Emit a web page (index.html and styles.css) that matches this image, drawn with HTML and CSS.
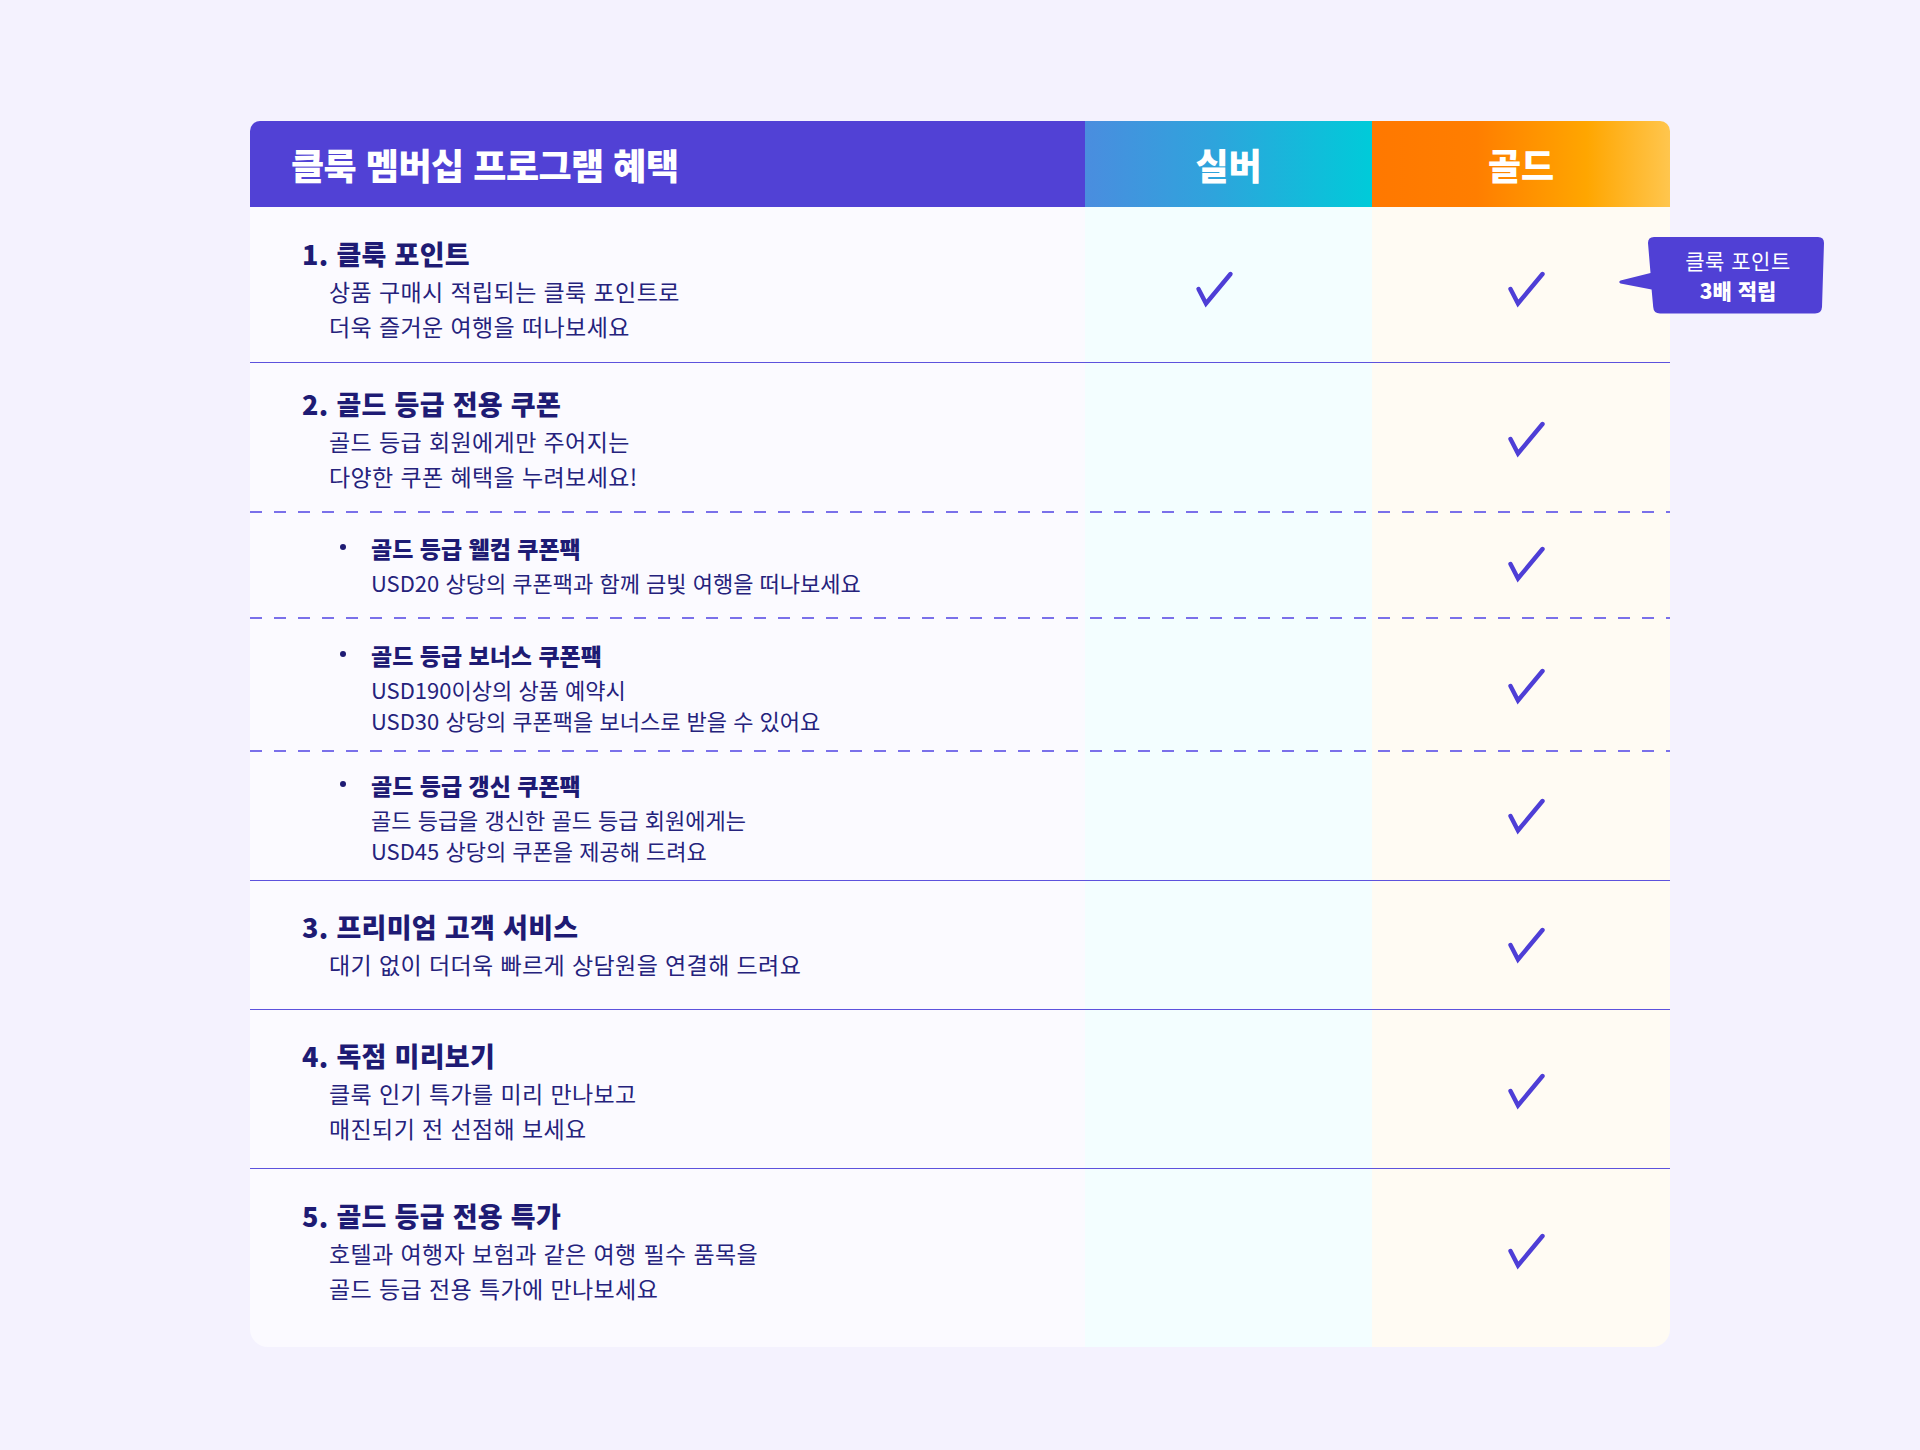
FILE: index.html
```html
<!DOCTYPE html>
<html lang="ko">
<head>
<meta charset="utf-8">
<title>클룩 멤버십 프로그램 혜택</title>
<link rel="stylesheet" href="styles.css">
</head>
<body>
<div class="page">
  <div class="table">
    <div class="head">
      <div class="head-title">클룩 멤버십 프로그램 혜택</div>
      <div class="head-silver">실버</div>
      <div class="head-gold">골드</div>
    </div>
    <div class="tbody">
      <div class="row main r1">
        <div class="label">
          <div class="t">1. 클룩 포인트</div>
          <div class="d">상품 구매시 적립되는 클룩 포인트로<br>더욱 즐거운 여행을 떠나보세요</div>
        </div>
        <div class="cell silver"><svg class="check" viewBox="0 0 40 40"><path d="M4.5 20 L12 34.5 L36.5 5"/></svg></div>
        <div class="cell gold"><svg class="check" viewBox="0 0 40 40"><path d="M4.5 20 L12 34.5 L36.5 5"/></svg></div>
      </div>
      <div class="row main r2 solid">
        <div class="label">
          <div class="t">2. 골드 등급 전용 쿠폰</div>
          <div class="d">골드 등급 회원에게만 주어지는<br>다양한 쿠폰 혜택을 누려보세요!</div>
        </div>
        <div class="cell silver"></div>
        <div class="cell gold"><svg class="check" viewBox="0 0 40 40"><path d="M4.5 20 L12 34.5 L36.5 5"/></svg></div>
      </div>
      <div class="row sub r2a dashed">
        <div class="label">
          <div class="t"><span class="dot"></span>골드 등급 웰컴 쿠폰팩</div>
          <div class="d">USD20 상당의 쿠폰팩과 함께 금빛 여행을 떠나보세요</div>
        </div>
        <div class="cell silver"></div>
        <div class="cell gold"><svg class="check" viewBox="0 0 40 40"><path d="M4.5 20 L12 34.5 L36.5 5"/></svg></div>
      </div>
      <div class="row sub r2b dashed">
        <div class="label">
          <div class="t"><span class="dot"></span>골드 등급 보너스 쿠폰팩</div>
          <div class="d">USD190이상의 상품 예약시<br>USD30 상당의 쿠폰팩을 보너스로 받을 수 있어요</div>
        </div>
        <div class="cell silver"></div>
        <div class="cell gold"><svg class="check" viewBox="0 0 40 40"><path d="M4.5 20 L12 34.5 L36.5 5"/></svg></div>
      </div>
      <div class="row sub r2c dashed">
        <div class="label">
          <div class="t"><span class="dot"></span>골드 등급 갱신 쿠폰팩</div>
          <div class="d">골드 등급을 갱신한 골드 등급 회원에게는<br>USD45 상당의 쿠폰을 제공해 드려요</div>
        </div>
        <div class="cell silver"></div>
        <div class="cell gold"><svg class="check" viewBox="0 0 40 40"><path d="M4.5 20 L12 34.5 L36.5 5"/></svg></div>
      </div>
      <div class="row main r3 solid">
        <div class="label">
          <div class="t">3. 프리미엄 고객 서비스</div>
          <div class="d">대기 없이 더더욱 빠르게 상담원을 연결해 드려요</div>
        </div>
        <div class="cell silver"></div>
        <div class="cell gold"><svg class="check" viewBox="0 0 40 40"><path d="M4.5 20 L12 34.5 L36.5 5"/></svg></div>
      </div>
      <div class="row main r4 solid">
        <div class="label">
          <div class="t">4. 독점 미리보기</div>
          <div class="d">클룩 인기 특가를 미리 만나보고<br>매진되기 전 선점해 보세요</div>
        </div>
        <div class="cell silver"></div>
        <div class="cell gold"><svg class="check" viewBox="0 0 40 40"><path d="M4.5 20 L12 34.5 L36.5 5"/></svg></div>
      </div>
      <div class="row main r5 solid">
        <div class="label">
          <div class="t">5. 골드 등급 전용 특가</div>
          <div class="d">호텔과 여행자 보험과 같은 여행 필수 품목을<br>골드 등급 전용 특가에 만나보세요</div>
        </div>
        <div class="cell silver"></div>
        <div class="cell gold"><svg class="check" viewBox="0 0 40 40"><path d="M4.5 20 L12 34.5 L36.5 5"/></svg></div>
      </div>
    </div>
    <div class="tooltip">
      <svg class="tip-shape" viewBox="0 0 208 77"><path d="M36 0 L200 0 Q206 0 206 6 L204 70 Q203.6 76.5 197 76.5 L42 76.5 Q35.6 76.5 35.2 70 L33.6 52.5 L2.5 46.5 Q0 45 2.5 43.5 L32.5 36 L30 6 Q30 0 36 0 Z"/></svg>
      <div class="tip-text">
        <div class="tip-l1">클룩 포인트</div>
        <div class="tip-l2">3배 적립</div>
      </div>
    </div>
  </div>
</div>
</body>
</html>
```

FILE: styles.css
```css
* { box-sizing: border-box; }
html, body { margin: 0; padding: 0; }
body {
  background: #f4f2fe;
  font-family: "Noto Sans CJK KR", "Noto Sans", sans-serif;
  color: #1e1b74;
}
.page {
  width: 1920px;
  min-height: 1450px;
  padding-top: 121px;
}
.table {
  position: relative;
  width: 1420px;
  margin-left: 250px;
}
.head {
  display: grid;
  grid-template-columns: 835px 287px 298px;
  height: 86px;
  border-radius: 10px 10px 0 0;
  overflow: hidden;
  color: #fff;
  font-weight: 900;
  font-size: 36px;
}
.head > div {
  display: flex;
  align-items: center;
  line-height: 1;
}
.head-title {
  background: #5141d5;
  padding-left: 41px;
  letter-spacing: -0.5px;
}
.head-silver {
  justify-content: center;
  background: linear-gradient(90deg, #4a8ddf 0%, #2ea4dc 45%, #00cbd9 100%);
}
.head-gold {
  justify-content: center;
  background: linear-gradient(90deg, #ff7800 0%, #ff7e00 35%, #ffa600 72%, #ffc64e 100%);
}
.tbody {
  background: linear-gradient(90deg, #fbfaff 0 835px, #f3feff 835px 1122px, #fffbf3 1122px 1420px);
  border-radius: 0 0 18px 18px;
}
.row {
  display: grid;
  grid-template-columns: 835px 287px 298px;
  align-items: center;
}
.row.solid { border-top: 1px solid #5d52dd; }
.row.dashed {
  background-image: repeating-linear-gradient(90deg, #7a70ea 0 12px, transparent 12px 24px);
  background-size: 100% 2px;
  background-repeat: no-repeat;
  background-position: 0 0;
}
.label { padding-left: 52px; }
.main .t {
  font-size: 27px;
  font-weight: 900;
  line-height: 40px;
  letter-spacing: 0.3px;
  color: #1e1b74;
}
.main .d {
  font-size: 23px;
  line-height: 35px;
  letter-spacing: 0.4px;
  margin-left: 27px;
  color: #25227c;
}
.sub .label { padding-left: 90px; }
.sub .t {
  display: flex;
  align-items: center;
  font-size: 23px;
  font-weight: 900;
  line-height: 38px;
  color: #1e1b74;
}
.dot {
  width: 6px;
  height: 6px;
  border-radius: 50%;
  background: #1e1b74;
  margin-right: 25px;
  margin-top: -2px;
}
.sub .d {
  font-size: 22px;
  line-height: 31px;
  margin-left: 31px;
  color: #25227c;
}
.cell {
  display: flex;
  justify-content: center;
  align-items: center;
}
.cell.silver { padding-right: 29px; }
.cell.gold { padding-left: 10px; }
.check {
  width: 40px;
  height: 40px;
  display: block;
}
.check path {
  fill: none;
  stroke: #4e3ed6;
  stroke-width: 4.4;
  stroke-linecap: round;
  stroke-linejoin: miter;
}
.r1 { padding: 27px 0 18px; }
.r2 { padding: 21px 0 17px; }
.r2a { padding: 18px 0 19px; }
.r2b { padding: 19px 0 14px; }
.r2c { padding: 16px 0 14px; }
.r3 { padding: 26px 0 27px; }
.r4 { padding: 26px 0 22px; }
.r5 { padding: 27px 0 41px; }
.tooltip {
  position: absolute;
  left: 1368px;
  top: 116px;
  width: 208px;
  height: 77px;
}
.tip-shape {
  position: absolute;
  left: 0;
  top: 0;
  width: 208px;
  height: 77px;
}
.tip-shape path { fill: #5040d5; }
.tip-text {
  position: absolute;
  left: 32px;
  top: 8px;
  width: 176px;
  text-align: center;
  color: #fff;
  font-size: 21px;
  line-height: 30px;
}
.tip-l1 { font-weight: 400; letter-spacing: 0.5px; }
.tip-l2 { font-weight: 900; }
```
